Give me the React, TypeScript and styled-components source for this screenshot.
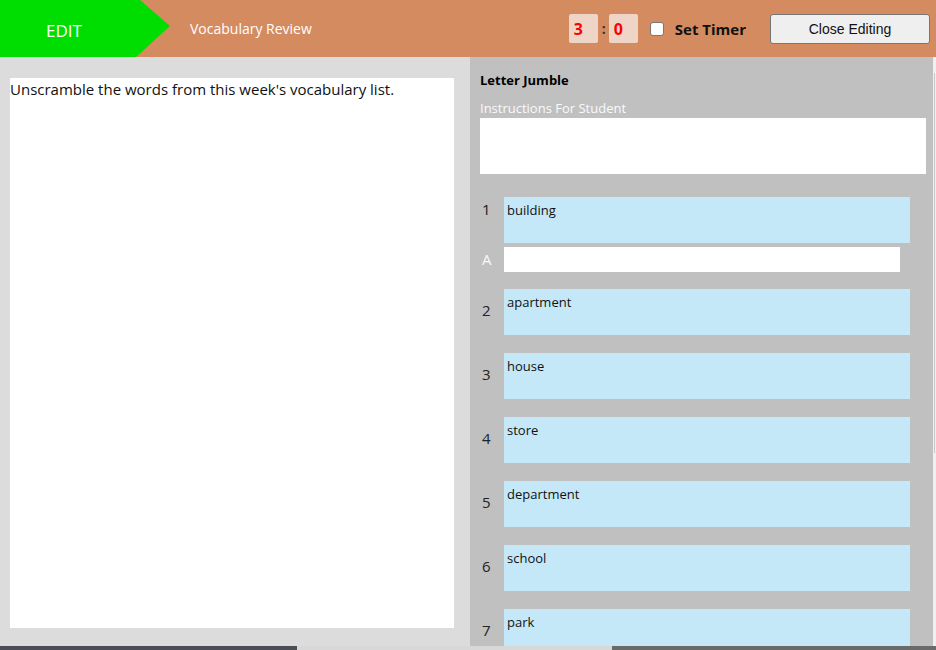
import styled, { createGlobalStyle } from "styled-components";

const header_color = "#d48b5f";
const item_color = "#c5e8f9";
const panel_color = "#c0c0c0";
const ui_font = `"Open Sans", "Noto Sans", sans-serif`;

const words = ["building", "apartment", "house", "store", "department", "school", "park"];

const GlobalStyle = createGlobalStyle`
  html, body {
    margin: 0;
    padding: 0;
    overflow: hidden;
  }
  body {
    font-family: ${ui_font};
  }
`;

const Page = styled.div`
  width: 936px;
  height: 650px;
  display: grid;
  grid-template-rows: 57px 1fr 4px;
  overflow: hidden;
`;

const Header = styled.header`
  background-color: ${header_color};
  display: flex;
  align-items: center;
`;

const EditTab = styled.div`
  width: 170px;
  height: 57px;
  background-color: #00dd00;
  clip-path: polygon(0 0, 140px 0, 170px 26px, 136px 57px, 0 57px);
  color: white;
  font-size: 17px;
  display: flex;
  align-items: center;
  padding-left: 46px;
  box-sizing: border-box;
  padding-top: 4px;
`;

const Title = styled.div`
  color: white;
  font-size: 14px;
  margin-left: 20px;
  flex: 1;
`;

const TimerBox = styled.div`
  width: 29px;
  height: 29px;
  background-color: #efd5c7;
  border-radius: 2px;
  color: red;
  font-weight: bold;
  font-size: 16px;
  display: flex;
  align-items: center;
  padding-left: 5px;
  box-sizing: border-box;
`;

const Colon = styled.span`
  font-weight: bold;
  color: #333;
  font-size: 14px;
  margin: 0 3px 0 4px;
`;

const Check = styled.input`
  width: 14px;
  height: 14px;
  margin: 0 11px 0 12px;
  appearance: none;
  background: white;
  border: 1px solid #767676;
  border-radius: 3px;
`;

const TimerLabel = styled.span`
  font-weight: bold;
  font-size: 15px;
  color: #111;
`;

const CloseButton = styled.button`
  margin-left: 24px;
  margin-right: 6px;
  width: 160px;
  height: 30px;
  background: #efefef;
  border: 1px solid #767676;
  border-radius: 3px;
  font-family: "Liberation Sans", Arial, sans-serif;
  font-size: 14px;
  color: #111;
`;

const Main = styled.main`
  display: grid;
  grid-template-columns: 470px 1fr;
  min-height: 0;
`;

const LeftPane = styled.section`
  background-color: #dcdcdc;
  padding: 21px 16px 18px 10px;
  display: flex;
`;

const MessageArea = styled.div`
  flex: 1;
  background: white;
  font-size: 15px;
  color: #111;
  line-height: 22px;
`;

const RightPane = styled.section`
  background-color: ${panel_color};
  display: flex;
  overflow: hidden;
`;

const RightContent = styled.div`
  flex: 1;
  padding: 14px 7px 0 10px;
`;

const ScrollTrack = styled.div`
  width: 3px;
  background: #f0f0f0;
  display: flex;
  flex-direction: column;
  padding-top: 16px;
`;

const ScrollThumb = styled.div`
  height: 380px;
  margin-left: 1px;
  width: 1px;
  background: #c8c8c8;
`;

const SectionTitle = styled.div`
  font-weight: bold;
  font-size: 13px;
  line-height: 18px;
  color: #000;
`;

const FieldLabel = styled.div`
  color: #fafafa;
  font-size: 13px;
  line-height: 18px;
  margin-top: 10px;
`;

const InstructionsBox = styled.div`
  margin-top: 1px;
  height: 56px;
  background: white;
`;

const ItemList = styled.div`
  margin-top: 23px;
  display: flex;
  flex-direction: column;
  gap: 18px;
`;

const ItemRow = styled.div`
  display: grid;
  grid-template-columns: 24px 406px;
`;

const RowLabel = styled.div<{ $top: number; $light?: boolean }>`
  font-size: 15px;
  line-height: 18px;
  padding-top: ${(p) => p.$top}px;
  padding-left: 2px;
  color: ${(p) => (p.$light ? "#fafafa" : "#222")};
`;

const WordBox = styled.div`
  height: 46px;
  background: ${item_color};
  font-size: 13px;
  line-height: 16px;
  padding: 5px 3px 0;
  box-sizing: border-box;
  color: #111;
`;

const AnswerRow = styled.div`
  display: grid;
  grid-template-columns: 24px 396px;
  margin-top: 4px;
  margin-bottom: -1px;
`;

const AnswerBox = styled.div`
  height: 25px;
  background: white;
`;

const FirstGroup = styled.div``;

const BottomBar = styled.div`
  display: grid;
  grid-template-columns: 297px 315px 1fr;
`;

const BarPart = styled.div<{ $color: string }>`
  background: ${(p) => p.$color};
`;

export default function App() {
  return (
    <>
      <GlobalStyle />
      <Page>
        <Header>
          <EditTab>EDIT</EditTab>
          <Title>Vocabulary Review</Title>
          <TimerBox>3</TimerBox>
          <Colon>:</Colon>
          <TimerBox>0</TimerBox>
          <Check type="checkbox" />
          <TimerLabel>Set Timer</TimerLabel>
          <CloseButton>Close Editing</CloseButton>
        </Header>
        <Main>
          <LeftPane>
            <MessageArea>Unscramble the words from this week's vocabulary list.</MessageArea>
          </LeftPane>
          <RightPane>
            <RightContent>
              <SectionTitle>Letter Jumble</SectionTitle>
              <FieldLabel>Instructions For Student</FieldLabel>
              <InstructionsBox />
              <ItemList>
                <FirstGroup>
                  <ItemRow>
                    <RowLabel $top={3}>1</RowLabel>
                    <WordBox>{words[0]}</WordBox>
                  </ItemRow>
                  <AnswerRow>
                    <RowLabel $top={3} $light>
                      A
                    </RowLabel>
                    <AnswerBox />
                  </AnswerRow>
                </FirstGroup>
                {words.slice(1).map((w, i) => (
                  <ItemRow key={w}>
                    <RowLabel $top={12}>{i + 2}</RowLabel>
                    <WordBox>{w}</WordBox>
                  </ItemRow>
                ))}
              </ItemList>
            </RightContent>
            <ScrollTrack>
              <ScrollThumb />
            </ScrollTrack>
          </RightPane>
        </Main>
        <BottomBar>
          <BarPart $color="#4a4f55" />
          <BarPart $color="#d8d8d8" />
          <BarPart $color="#6a6a6a" />
        </BottomBar>
      </Page>
    </>
  );
}
